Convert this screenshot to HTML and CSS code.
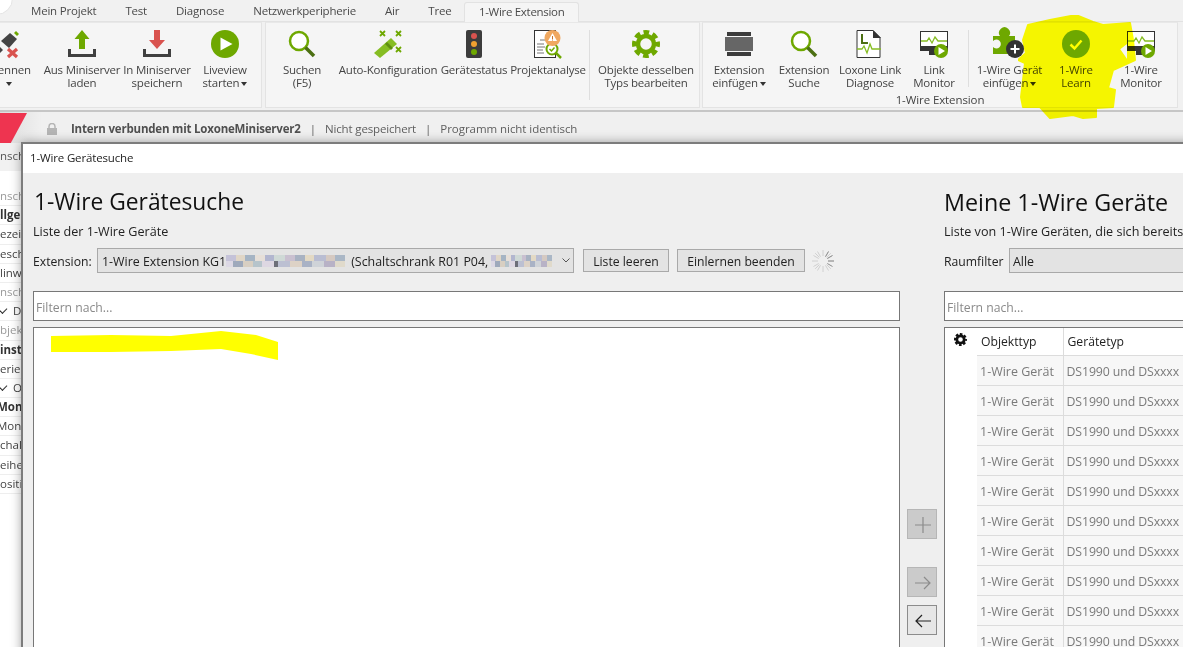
FILE: index.html
```html
<!DOCTYPE html>
<html lang="de">
<head>
<meta charset="utf-8">
<title>1-Wire Gerätesuche</title>
<link rel="stylesheet" href="styles.css">
</head>
<body>
<div class="app">
  <div class="orb"></div>
  <nav class="tabs">
    <span class="tab">Mein Projekt</span><span class="tab">Test</span><span class="tab">Diagnose</span><span class="tab">Netzwerkperipherie</span><span class="tab">Air</span><span class="tab">Tree</span><span class="tab active">1-Wire Extension</span>
  </nav>
  <div class="ribbon">
    <section class="group g1">
      <div class="row">
        <div class="rb w70">
          <svg class="ico" viewBox="0 0 28 28"><path d="M-5 21 l7-7 6 6-7 7z" fill="#444"/><path d="M6 11 l9-8 7 6-8 9z" fill="#444"/><path d="M19 3l2-2 3 3-2 2z" fill="#6ea800"/><path d="M13 20l9 8M22 20l-9 8" stroke="#d9534f" stroke-width="3.2" transform="translate(0 -1)"/></svg>
          <span class="lb">Trennen<br><i class="caret"></i></span>
        </div>
        <div class="rb w76">
          <svg class="ico" viewBox="0 0 28 28"><path d="M1.500 19v6.500h25V19" fill="none" stroke="#404040" stroke-width="3"/><path d="M14 0l7.500 9H17v10h-6V9H6.500z" fill="#6ea800"/></svg>
          <span class="lb">Aus Miniserver<br>laden</span>
        </div>
        <div class="rb w74">
          <svg class="ico" viewBox="0 0 28 28"><path d="M1.500 19v6.500h25V19" fill="none" stroke="#404040" stroke-width="3"/><path d="M11 0h6v10h5l-8 9-8-9h5z" fill="#d9534f"/></svg>
          <span class="lb">In Miniserver<br>speichern</span>
        </div>
        <div class="rb w62">
          <svg class="ico" viewBox="0 0 28 28"><circle cx="14" cy="14" r="14" fill="#6ea800"/><path d="M9.500 7.500l12 6.500-12 6.500z" fill="#fff"/></svg>
          <span class="lb">Liveview<br>starten<i class="caret inl"></i></span>
        </div>
      </div>
    </section>
    <section class="group g2">
      <div class="row">
        <div class="rb w72">
          <svg class="ico" viewBox="0 0 28 28"><circle cx="11" cy="11" r="9" fill="#fff" stroke="#6ea800" stroke-width="2.500"/><path d="M17.500 17.500L26 26" stroke="#4c6f12" stroke-width="3.500"/></svg>
          <span class="lb">Suchen<br>(F5)</span>
        </div>
        <div class="rb w100">
          <svg class="ico" viewBox="0 0 28 28"><path d="M0 23 17 8l6 6L6 28z" fill="#86bd23"/><path d="M11 14l6 6 2-2-6-6z" fill="#5f8f10"/><path d="M6 0l5 5M11 0L6 5M22 0l5 5M27 0l-5 5M22 16l5 5M27 16l-5 5" stroke="#6ea800" stroke-width="1.800" transform="translate(0 1)"/></svg>
          <span class="lb">Auto-Konfiguration</span>
        </div>
        <div class="rb w72">
          <svg class="ico" viewBox="0 0 28 28"><rect x="6" y="0" width="16" height="28" rx="2" fill="#3c3c3c"/><circle cx="14" cy="6" r="3" fill="#d9534f"/><circle cx="14" cy="14" r="3" fill="#f0a030"/><circle cx="14" cy="22" r="3" fill="#6ea800"/></svg>
          <span class="lb">Gerätestatus</span>
        </div>
        <div class="rb w76">
          <svg class="ico" viewBox="0 0 28 28"><rect x="0.500" y="0.500" width="21" height="27" fill="#fff" stroke="#333"/><path d="M3 14h7M3 17h8M3 20h6M3 23h7M6 10h6" stroke="#777"/><circle cx="18" cy="19" r="5.500" fill="#fff" stroke="#6ea800" stroke-width="2"/><path d="M22 23l5 5" stroke="#6ea800" stroke-width="2.500"/><path d="M15.500 19l2 2 3-3.500" fill="none" stroke="#6ea800" stroke-width="1.500"/><circle cx="18.500" cy="8" r="8" fill="#f0a860"/><path d="M18.500 3l4.500 8h-9z" fill="#fff"/><path d="M18.500 6v3M18.500 9.500v1" stroke="#c8742a"/></svg>
          <span class="lb">Projektanalyse</span>
        </div>
        <i class="sep s70"></i>
        <div class="rb w106">
          <svg class="ico" viewBox="0 0 28 28"><circle cx="14" cy="14" r="8" fill="none" stroke="#6ea800" stroke-width="4.500"/><circle cx="14" cy="14" r="11.500" fill="none" stroke="#6ea800" stroke-width="5" stroke-dasharray="5.500 3.530" stroke-dashoffset="2.750"/></svg>
          <span class="lb">Objekte desselben<br>Typs bearbeiten</span>
        </div>
      </div>
    </section>
    <section class="group g3">
      <div class="row">
        <div class="rb w64">
          <svg class="ico" viewBox="0 0 28 28"><rect x="2" y="2" width="24" height="4" fill="#3c3c3c"/><rect y="7" width="28" height="14" fill="#666"/><rect x="2" y="22" width="24" height="4" fill="#3c3c3c"/></svg>
          <span class="lb">Extension<br>einfügen<i class="caret inl"></i></span>
        </div>
        <div class="rb w66">
          <svg class="ico" viewBox="0 0 28 28"><circle cx="11" cy="11" r="9" fill="#fff" stroke="#6ea800" stroke-width="2.500"/><path d="M17.500 17.500L26 26" stroke="#4c6f12" stroke-width="3.500"/></svg>
          <span class="lb">Extension<br>Suche</span>
        </div>
        <div class="rb w66">
          <svg class="ico" viewBox="0 0 28 28"><path d="M1 .5h16l7 7v20H1z" fill="#fff" stroke="#333"/><path d="M17 0l8 8h-8z" fill="#333"/><path d="M6 4v9h6" fill="none" stroke="#4c6f12" stroke-width="2"/><path d="M1 19h5l2-3 3 7 3-9 2 5h9" fill="none" stroke="#86bd23" stroke-width="1.300"/></svg>
          <span class="lb">Loxone Link<br>Diagnose</span>
        </div>
        <div class="rb w62">
          <svg class="ico" viewBox="0 0 28 28"><rect x=".5" y="1.500" width="27" height="19" fill="#fff" stroke="#333"/><rect y="16" width="28" height="5" fill="#333"/><path d="M9 21h8v4H9z" fill="#333"/><path d="M1 11h6l2-3 3 5 3-6 3 4h9" fill="none" stroke="#86bd23" stroke-width="1.300"/><circle cx="21" cy="21" r="7" fill="#6ea800"/><path d="M18.500 17l6.500 4-6.500 4z" fill="#fff"/></svg>
          <span class="lb">Link<br>Monitor</span>
        </div>
        <i class="sep s57"></i>
        <div class="rb w75">
          <svg class="ico" viewBox="0 0 28 28"><path d="M-3 6h7a5.500 5.500 0 1 1 9 0h6v7a4 4 0 1 1 0 7v4H-3v-7a4.500 4.500 0 1 0 0-6z" fill="#6ea800"/><circle cx="19" cy="19" r="9" fill="#333"/><path d="M19 14.500v9M14.500 19h9" stroke="#fff" stroke-width="2"/></svg>
          <span class="lb">1-Wire Gerät<br>einfügen<i class="caret inl"></i></span>
        </div>
        <div class="rb w58">
          <svg class="ico" viewBox="0 0 28 28"><circle cx="14" cy="14" r="14" fill="#6ea800"/><path d="M8.500 14.500l4 4 7-8" fill="none" stroke="#fff" stroke-width="2.500"/></svg>
          <span class="lb">1-Wire<br>Learn</span>
        </div>
        <div class="rb w72">
          <svg class="ico" viewBox="0 0 28 28"><rect x=".5" y="1.500" width="27" height="19" fill="#fff" stroke="#333"/><rect y="16" width="28" height="5" fill="#333"/><path d="M9 21h8v4H9z" fill="#333"/><path d="M1 11h6l2-3 3 5 3-6 3 4h9" fill="none" stroke="#86bd23" stroke-width="1.300"/><circle cx="21" cy="21" r="7" fill="#6ea800"/><path d="M18.500 17l6.500 4-6.500 4z" fill="#fff"/></svg>
          <span class="lb">1-Wire<br>Monitor</span>
        </div>
      </div>
      <div class="glabel">1-Wire Extension</div>
    </section>
  </div>
  <div class="status">
    <i class="redmark"></i>
    <svg class="lock" viewBox="0 0 10 12"><path d="M2 5V3.500a3 3 0 0 1 6 0V5" fill="none" stroke="#b5b5b5" stroke-width="1.500"/><rect y="5" width="10" height="7" fill="#b5b5b5"/></svg>
    <b class="conn">Intern verbunden mit LoxoneMiniserver2</b><span class="pipe">|</span><span class="tight">Nicht gespeichert</span><span class="pipe">|</span><span>Programm nicht identisch</span>
  </div>
  <aside class="side">
    <div class="side-top">nscha</div>
    <div class="srow mut">nsch</div>
    <div class="srow strong">llge</div>
    <div class="srow">ezei</div>
    <div class="srow">esch</div>
    <div class="srow">linw</div>
    <div class="srow mut">nsch</div>
    <div class="srow"><i class="tick"></i>&nbsp;&nbsp;Di</div>
    <div class="srow mut">bjek</div>
    <div class="srow strong">inste</div>
    <div class="srow">erien</div>
    <div class="srow"><i class="tick"></i>&nbsp;&nbsp;O</div>
    <div class="srow strong clip">Mont</div>
    <div class="srow clip">Mont</div>
    <div class="srow">chal</div>
    <div class="srow">eihe</div>
    <div class="srow">ositi</div>
  </aside>

  <div class="dialog">
    <div class="titlebar">1-Wire Gerätesuche</div>
    <div class="dbody">
      <div class="col left">
        <h1>1-Wire Gerätesuche</h1>
        <p class="sub">Liste der 1-Wire Geräte</p>
        <div class="ctrl">
          <label class="lab">Extension:</label>
          <div class="select sel-ext">
            <span>1-Wire Extension KG1</span><i class="px px1"></i><span class="gapl">(Schaltschrank R01 P04,</span><i class="px px2"></i>
            <svg class="chev" viewBox="0 0 8 5"><path d="M.5.500L4 4 7.500.500" fill="none" stroke="#555"/></svg>
          </div>
          <button class="btn b1" type="button">Liste leeren</button>
          <button class="btn b2" type="button">Einlernen beenden</button>
          <svg class="spin" viewBox="0 0 24 24" stroke="#d0d0d0" stroke-width="1"><path d="M12 1v6M12 17v6M1 12h6M17 12h6M4.200 4.200l4.200 4.200M15.600 15.600l4.200 4.200M4.200 19.800l4.200-4.200M15.600 8.400l4.200-4.200M6.500 2.500l3 5.200M14.500 16.300l3 5.200M2.500 17.500l5.200-3M16.300 9.500l5.200-3M17.500 2.500l-3 5.200M9.500 16.300l-3 5.200M2.500 6.500l5.200 3"/><path d="M16.300 14.500l5.200 3M14.500 7.700l3-5.200M16.300 9.500l5.200-3M17 12h6" stroke="#8c8c8c"/></svg>
        </div>
        <div class="filter">Filtern nach...</div>
        <div class="list">
          <svg class="stroke" viewBox="0 0 228 30"><path d="M0 5 60 4l60 1 50-5 35 4 22 7v18l-27-6-30-5-50 2-60 1H0z" fill="#ff0"/></svg>
        </div>
      </div>
      <div class="mid">
        <div class="sq off"><svg viewBox="0 0 16 16"><path d="M8 0v16M0 8h16" stroke="#8c8c8c" stroke-width="1.200"/></svg></div>
        <div class="sq off gap2"><svg viewBox="0 0 16 16"><path d="M0 8h15M9 2l6 6-6 6" fill="none" stroke="#8c8c8c" stroke-width="1.200"/></svg></div>
        <div class="sq on"><svg viewBox="0 0 16 16"><path d="M16 8H1M7 2 1 8l6 6" fill="none" stroke="#222" stroke-width="1.200"/></svg></div>
      </div>
      <div class="col right">
        <h1>Meine 1-Wire Geräte</h1>
        <p class="sub">Liste von 1-Wire Geräten, die sich bereits im Projekt befinden</p>
        <div class="ctrl">
          <label class="lab">Raumfilter</label>
          <div class="select sel-room"><span>Alle</span></div>
        </div>
        <div class="filter">Filtern nach...</div>
        <div class="grid">
          <div class="gearcol"><svg class="tgear" viewBox="0 0 28 28"><circle cx="14" cy="14" r="8" fill="none" stroke="#111" stroke-width="6"/><circle cx="14" cy="14" r="11.500" fill="none" stroke="#111" stroke-width="5" stroke-dasharray="5.500 3.530" stroke-dashoffset="2.750"/></svg></div>
          <table class="tbl">
            <thead><tr><th>Objekttyp</th><th>Gerätetyp</th></tr></thead>
            <tbody>
              <tr><td>1-Wire Gerät</td><td>DS1990 und DSxxxx</td></tr>
              <tr><td>1-Wire Gerät</td><td>DS1990 und DSxxxx</td></tr>
              <tr><td>1-Wire Gerät</td><td>DS1990 und DSxxxx</td></tr>
              <tr><td>1-Wire Gerät</td><td>DS1990 und DSxxxx</td></tr>
              <tr><td>1-Wire Gerät</td><td>DS1990 und DSxxxx</td></tr>
              <tr><td>1-Wire Gerät</td><td>DS1990 und DSxxxx</td></tr>
              <tr><td>1-Wire Gerät</td><td>DS1990 und DSxxxx</td></tr>
              <tr><td>1-Wire Gerät</td><td>DS1990 und DSxxxx</td></tr>
              <tr><td>1-Wire Gerät</td><td>DS1990 und DSxxxx</td></tr>
              <tr><td>1-Wire Gerät</td><td>DS1990 und DSxxxx</td></tr>
            </tbody>
          </table>
        </div>
      </div>
    </div>
  </div>

  <svg class="marker" viewBox="0 0 125 110"><path fill-rule="evenodd" d="M10 10 32 5 58 0 75 7 85 10 112 8 115 25 117 45 95 55 90 73 97 75 95 92 78 93 78 102 65 103 55 100 32 103 22 92 5 92 3 82 7 48 0 45 8 38 5 25zM110 27 101 34 110 47z" fill="#ff0" stroke="#ff0" stroke-width="2" stroke-linejoin="round"/></svg>
</div>
</body>
</html>
```

FILE: styles.css
```css
* { box-sizing: border-box; }
html, body { margin: 0; height: 100%; overflow: hidden; background: #fff; }
.app {
  position: relative;
  width: 1183px;
  height: 647px;
  overflow: hidden;
  background: #fff;
  font-family: "Open Sans", "Noto Sans", "Liberation Sans", sans-serif;
  font-size: 11.5px;
  color: #444;
}
.orb {
  position: absolute;
  left: -20px;
  top: -18px;
  width: 33px;
  height: 33px;
  border-radius: 50%;
  background: #fff;
  border: 1px solid #e4e4e4;
}
.tabs {
  display: flex;
  height: 22px;
  padding-left: 16.500px;
  background: #f1f1f1;
  border-bottom: 1px solid #e2e2e2;
  letter-spacing: -.2px;
}
.tab {
  padding: 0 14.500px;
  line-height: 22px;
  white-space: nowrap;
  color: #4a4a4a;
}
.tab.active {
  margin: 2px 0 0 -2px;
  height: 20px;
  line-height: 18px;
  background: #f5f5f5;
  border: 1px solid #e2e2e2;
  border-bottom: 0;
  border-radius: 3px 3px 0 0;
  padding: 0 14px;
  letter-spacing: -.3px;
}
.ribbon {
  display: flex;
  height: 90px;
  background: #f1f1f1;
  border-bottom: 2px solid #c6c6c6;
  padding-bottom: 2px;
}
.group {
  display: flex;
  flex-direction: column;
  background: #f5f5f5;
  border: 1px solid #e3e3e3;
  border-top-color: #e8e8e8;
}
.g1 { margin-left: -27px; width: 289px; }
.g2 { margin-left: 3px; width: 435px; }
.g3 { margin-left: 2px; width: 476px; padding-left: 4px; }
.row { display: flex; height: 77px; }
.rb {
  display: flex;
  flex-direction: column;
  align-items: center;
  flex: none;
  padding-top: 7px;
  text-align: center;
}
.w58 { width: 58px; }
.w62 { width: 62px; }
.w64 { width: 64px; }
.w66 { width: 66px; }
.w70 { width: 70px; }
.w72 { width: 72px; }
.w74 { width: 74px; }
.w75 { width: 75px; }
.w76 { width: 76px; }
.w100 { width: 100px; }
.w106 { width: 106px; }
.ico { width: 28px; height: 28px; flex: none; overflow: visible; }
.lb {
  margin-top: 5px;
  line-height: 13px;
  white-space: nowrap;
  letter-spacing: -.2px;
}
.caret {
  display: inline-block;
  width: 0;
  height: 0;
  border: 3.5px solid transparent;
  border-top: 4px solid #333;
  border-bottom: 0;
  vertical-align: middle;
}
.caret.inl { margin-left: 2px; }
.sep {
  flex: none;
  width: 1px;
  margin: 7px 3px 0;
  background: #dedede;
}
.s70 { height: 70px; }
.s57 { height: 57px; }
.glabel {
  margin: -4px 0 0 -4px;
  text-align: center;
  line-height: 14px;
  letter-spacing: -.1px;
}
.status {
  display: flex;
  align-items: center;
  height: 31px;
  padding-top: 2px;
  background: linear-gradient(90deg, #dcdcdc, #f0f0f0 42px);
  color: #5e5e5e;
  white-space: nowrap;
  letter-spacing: -.05px;
}
.redmark {
  align-self: stretch;
  width: 27px;
  margin-top: -1px;
  background: #ee3450;
  clip-path: polygon(0 0, 100% 0, 40% 100%, 0 100%);
}
.lock { width: 10px; height: 12px; margin-left: 20px; flex: none; }
.conn { margin-left: 14px; color: #505050; font-weight: 700; letter-spacing: -.2px; }
.pipe { margin: 0 9px; }
.tight { letter-spacing: -.15px; }
.side {
  width: 40px;
  height: 504px;
  overflow: hidden;
  white-space: nowrap;
  color: #444;
  font-size: 11.500px;
}
.side-top {
  height: 44px;
  padding-top: 5px;
  background: #f1f1f1;
  border-bottom: 16px solid #fff;
  color: #555;
  line-height: 16px;
}
.srow {
  height: 19.200px;
  line-height: 18px;
  border-bottom: 1px solid #eee;
}
.srow.mut { color: #9a9a9a; }
.srow.strong { font-weight: 700; color: #333; }
.srow.clip { text-indent: -3px; }
.tick {
  display: inline-block;
  width: 7px;
  height: 4px;
  border-left: 1px solid #333;
  border-bottom: 1px solid #333;
  transform: rotate(-45deg);
  vertical-align: 3px;
}
.dialog {
  position: absolute;
  left: 21px;
  top: 142px;
  width: 1400px;
  height: 620px;
  background: #efefef;
  border: 1px solid #7c7c7c;
  border-width: 2px 0 0 2px;
  box-shadow: 0 0 10px rgba(0, 0, 0, .35);
  color: #222;
  font-size: 12.200px;
}
.titlebar {
  height: 29px;
  padding-left: 7px;
  line-height: 27px;
  background: #fff;
  font-size: 11.500px;
  letter-spacing: -.15px;
  color: #222;
}
.dbody {
  display: flex;
  padding: 0 0 0 10px;
}
.col { flex: none; }
.left { width: 867px; }
.right { width: 480px; }
.mid {
  flex: none;
  width: 44px;
  padding: 336px 0 0 7px;
}
.sq {
  width: 30px;
  height: 30px;
  padding: 7px;
  border: 1px solid #b6b6b6;
}
.sq svg { display: block; width: 16px; height: 16px; }
.off { background: #cbcbcb; }
.on { background: #e6e6e6; border-color: #8c8c8c; margin-top: 8px; }
.gap2 { margin-top: 28px; }
h1 {
  margin: 13px 0 0;
  font-weight: 400;
  line-height: 32px;
  color: #111;
}
.left h1 { margin-left: 1px; font-size: 22.800px; }
.right h1 { font-size: 23.300px; }
.sub {
  margin: 6px 0 0;
  line-height: 16px;
  white-space: nowrap;
  color: #222;
  font-size: 12.600px;
}
.ctrl {
  display: flex;
  align-items: center;
  height: 25px;
  margin-top: 8px;
}
.lab { width: 64px; flex: none; padding-top: 1px; white-space: nowrap; }
.select {
  display: flex;
  align-items: center;
  height: 25px;
  padding: 1px 4px 0;
  background: #e3e3e3;
  border: 1px solid #a9a9a9;
  white-space: nowrap;
  font-size: 12.400px;
}
.sel-ext { position: relative; width: 477px; }
.sel-room { width: 400px; margin-left: 1px; padding-left: 3px; }
.gapl { margin-left: 6px; }
.px {
  display: block;
  flex: none;
  height: 12px;
  background-size: 100% 50%, 100% 50%;
  background-position: 0 0, 0 100%;
  background-repeat: no-repeat;
  background-image:
    linear-gradient(90deg, #c4c2d8 0 8%, #e0d6c6 8% 16%, #a5b4c4 16% 24%, #e6dfd8 24% 33%, #b2b6cf 33% 40%, #cfd9d6 40% 50%, #c9c0d0 50% 58%, #a8b2c2 58% 66%, #e3d9c4 66% 74%, #b9bdd2 74% 84%, #d5c9c1 84% 92%, #aab7c6 92%),
    linear-gradient(90deg, #dcd8e4 0 6%, #9ea9bb 6% 14%, #d8cfc2 14% 23%, #b6c4cb 23% 30%, #ddd7e2 30% 40%, #6d6f78 40% 44%, #bcc0d2 44% 54%, #ddd2c6 54% 64%, #a9b2c5 64% 72%, #cfd3d8 72% 82%, #b8b2c6 82% 92%, #e0dacb 92%);
}
.px1 { width: 119px; }
.px2 { width: 61px; margin-left: 3px; }
.chev { position: absolute; right: 3px; top: 9px; width: 8px; height: 5px; }
.btn {
  height: 23px;
  margin: 0;
  padding: 1px 0 0;
  background: #e3e3e3;
  border: 1px solid #a9a9a9;
  font: inherit;
  color: #222;
}
.b1 { width: 86px; margin-left: 9px; }
.b2 { width: 128px; margin-left: 8px; }
.spin { width: 24px; height: 24px; margin-left: 6px; flex: none; }
.filter {
  height: 30px;
  margin-top: 18px;
  padding-left: 2px;
  line-height: 31px;
  background: #fff;
  border: 1px solid #777;
  color: #8a8a8a;
}
.list {
  position: relative;
  height: 340px;
  margin-top: 6px;
  background: #fff;
  border: 1px solid #777;
}
.stroke {
  position: absolute;
  left: 17px;
  top: 3px;
  width: 228px;
  height: 30px;
}
.grid {
  display: flex;
  height: 340px;
  margin-top: 6px;
  background: #fff;
  border: 1px solid #777;
  overflow: hidden;
}
.gearcol { width: 32px; flex: none; padding: 5px 0 0 9px; }
.tgear { display: block; width: 13px; height: 13px; }
.tbl {
  width: 440px;
  table-layout: fixed;
  border-collapse: collapse;
  align-self: flex-start;
}
.tbl th, .tbl td {
  height: 30px;
  padding: 3px 3px 0;
  border: 1px solid #dcdcdc;
  border-top: 0;
  text-align: left;
  font-weight: 400;
  white-space: nowrap;
}
.tbl th { height: 27px; color: #222; padding: 0 0 0 4px; }
.tbl th:first-child, .tbl td:first-child { width: 86px; border-left: 0; }
.tbl td { background: #f7f7f7; color: #7a7a7a; font-size: 12.500px; }
.tbl td:last-child { padding-left: 3px; font-size: 12.300px; letter-spacing: -.1px; }
.marker {
  position: absolute;
  left: 1018px;
  top: 15px;
  width: 125px;
  height: 110px;
  mix-blend-mode: multiply;
}
```
